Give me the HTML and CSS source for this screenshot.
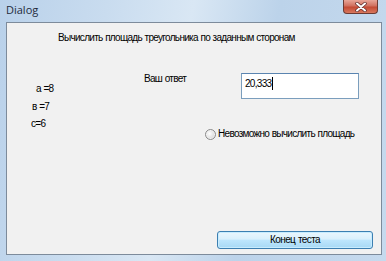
FILE: index.html
```html
<!DOCTYPE html>
<html>
<head>
<meta charset="utf-8">
<link rel="stylesheet" href="styles.css">
</head>
<body>
<div class="window">
  <div class="titlebar">
    <span class="title">Dialog</span>
    <div class="close">
      <svg width="14" height="10" viewBox="0 0 14 10"><path d="M3 1.5 L11 8.5 M11 1.5 L3 8.5" stroke="#5a2a2a" stroke-width="3.4" stroke-linecap="round"/><path d="M3 1.5 L11 8.5 M11 1.5 L3 8.5" stroke="#ffffff" stroke-width="2" stroke-linecap="round"/></svg>
    </div>
  </div>
  <div class="client">
    <div class="heading">Вычислить площадь треугольника по заданным сторонам</div>
    <div class="main">
      <div class="sides">
        <div class="side side-a">а =8</div>
        <div class="side side-b">в =7</div>
        <div class="side side-c">с=6</div>
      </div>
      <div class="answer-label">Ваш ответ</div>
      <div class="answer-col">
        <div class="input"><span>20,333</span><span class="caret"></span></div>
        <label class="radio"><span class="dot"></span>Невозможно вычислить площадь</label>
      </div>
    </div>
    <div class="footer">
      <button class="btn">Конец теста</button>
    </div>
  </div>
</div>
</body>
</html>
```
FILE: styles.css
```css
* { box-sizing: border-box; }
html, body { margin: 0; padding: 0; }
body {
  width: 386px;
  height: 261px;
  overflow: hidden;
  font-family: "Liberation Sans", Arial, sans-serif;
  font-size: 10px;
  letter-spacing: -0.7px;
  word-spacing: 0.5px;
  color: #000;
}
.window {
  width: 386px;
  height: 261px;
  display: flex;
  flex-direction: column;
  background: linear-gradient(100deg, #b9d1ea 0%, #c9dcef 25%, #d9e7f4 45%, #bcd3ea 65%, #c6daee 100%);
}
.titlebar {
  height: 22px;
  flex: none;
  display: flex;
  align-items: flex-start;
  justify-content: space-between;
  padding-left: 6px;
  padding-right: 8px;
}
.title {
  font-family: "Open Sans", "Liberation Sans", sans-serif;
  font-size: 11px;
  letter-spacing: 0;
  word-spacing: 0;
  line-height: 13px;
  margin-top: 3px;
  color: #1e2b3c;
}
.close {
  width: 35px;
  height: 14px;
  border: 1px solid #6b3b34;
  border-top: none;
  border-radius: 0 0 4px 4px;
  background: linear-gradient(#e8a597 0%, #d0705f 45%, #c44a34 55%, #d8785e 100%);
  display: flex;
  align-items: center;
  justify-content: center;
}
.close svg { display: block; }
.client {
  flex: 1;
  margin: 0 4px 6px 6px;
  border: 1px solid #7d8b9b;
  background: #f1f1f1;
  display: flex;
  flex-direction: column;
}
.heading {
  margin-top: 8px;
  padding-left: 51px;
  line-height: 13px;
}
.main {
  margin-top: 28px;
  display: grid;
  grid-template-columns: 113px 61px 1fr;
  padding-left: 24px;
}
.side { line-height: 13px; }
.side-a { margin-top: 10px; padding-left: 5px; }
.side-b { margin-top: 5px; padding-left: 1px; }
.side-c { margin-top: 4px; }
.answer-label { line-height: 13px; margin-top: 0; }
.answer-col { display: flex; flex-direction: column; }
.input {
  margin-left: 36px;
  margin-top: 1px;
  width: 118px;
  height: 26px;
  border: 1px solid #7b9ebd;
  border-top-color: #5a84b0;
  background: #fff;
  padding: 3px 0 0 3px;
  line-height: 13px;
  display: flex;
  align-items: flex-start;
}
.caret {
  display: inline-block;
  width: 1px;
  height: 13px;
  background: #000;
  margin-left: 1px;
}
.radio {
  display: flex;
  align-items: center;
  margin-top: 28px;
  line-height: 14px;
  gap: 2px;
  white-space: nowrap;
}
.dot {
  width: 11px;
  height: 11px;
  border-radius: 50%;
  border: 1px solid #8a8a8a;
  background: radial-gradient(circle at 40% 40%, #ffffff 0%, #e2e2e2 55%, #c8c8c8 100%);
  box-shadow: inset 0 0 0 1px #f4f4f4;
}
.footer {
  margin-top: auto;
  display: flex;
  justify-content: flex-end;
  padding-right: 8px;
  padding-bottom: 5px;
}
.btn {
  width: 156px;
  height: 18px;
  border: 1px solid #3c7fb1;
  border-radius: 3px;
  background: linear-gradient(#eaf6fd 0%, #d9f0fc 45%, #bee6fd 50%, #a7d9f5 100%);
  box-shadow: inset 0 0 0 1px #c8ecfe;
  font-family: "Liberation Sans", Arial, sans-serif;
  font-size: 10px;
  letter-spacing: -0.6px;
  word-spacing: 0.5px;
  color: #000;
  padding: 0;
  line-height: 14px;
}
```
